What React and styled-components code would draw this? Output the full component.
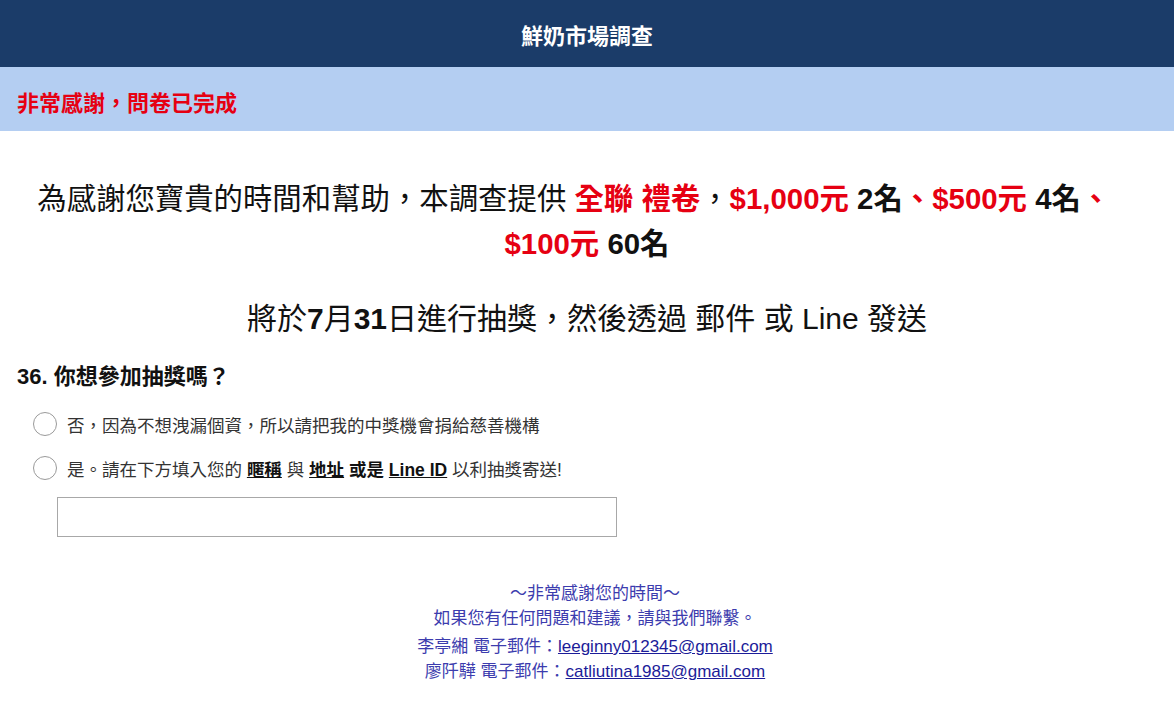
import React from "react";
import styled, { createGlobalStyle } from "styled-components";

const GlobalStyle = createGlobalStyle`
  body {
    margin: 0;
    background: #fff;
    font-family: "Liberation Sans", Arial, "Noto Sans CJK TC", sans-serif;
    color: #111;
  }
`;

const Header = styled.header`
  height: 67px;
  background: #1b3c69;
  display: flex;
  align-items: center;
  justify-content: center;
  color: #fff;
  font-size: 22px;
  font-weight: 700;
`;

const Banner = styled.div`
  height: 64px;
  background: #b4cef2;
  display: flex;
  align-items: center;
  padding-left: 17px;
  padding-top: 3px;
  box-sizing: border-box;
  color: #e60012;
  font-size: 22px;
  font-weight: 700;
`;

const Main = styled.main`
  padding: 0 17px;
`;

const Intro = styled.p`
  margin: 45px 0 0;
  text-align: center;
  font-size: ${(p) => p.size}px;
  line-height: 45px;
  color: #111;
`;

const Draw = styled(Intro)`
  margin-top: 30px;
`;

const Red = styled.span`
  color: #e60012;
  font-weight: 700;
`;

const Strong = styled.span`
  font-weight: 700;
`;

const TrailSpace = styled.span`
  display: inline-block;
  width: 0.9em;
`;

const Question = styled.h2`
  margin: 22px 0 0;
  font-size: 22px;
  line-height: 28px;
  font-weight: 700;
`;

const Options = styled.div`
  display: flex;
  flex-direction: column;
  gap: 18px;
  margin-top: 20px;
  padding-left: 16px;
`;

const Option = styled.label`
  display: flex;
  align-items: center;
  gap: 10px;
  font-size: 17.5px;
  color: #333;
  height: 26px;
`;

const Radio = styled.span`
  width: 22px;
  height: 22px;
  border: 1px solid #9a9a9a;
  border-radius: 50%;
  flex: none;
`;

const Key = styled.span`
  font-weight: 700;
  color: #111;
  text-decoration: underline;
`;

const Bold = styled.span`
  font-weight: 700;
  color: #111;
`;

const TextInput = styled.input`
  display: block;
  margin: 16px 0 0 40px;
  width: 560px;
  height: 40px;
  box-sizing: border-box;
  border: 1px solid #a8a8a8;
  outline: none;
  font-size: 16px;
`;

const Footer = styled.footer`
  margin-top: 44px;
  padding-left: 16px;
  text-align: center;
  color: #3c3cae;
  font-size: 17px;
  line-height: 25px;
`;

const FooterLine = styled.div`
  margin-top: ${(p) => p.gap || 0}px;
`;

const Mail = styled.a`
  color: #1c1c99;
  text-decoration: underline;
`;

export default function App() {
  return (
    <>
      <GlobalStyle />
      <Header>鮮奶市場調查</Header>
      <Banner>非常感謝，問卷已完成</Banner>
      <Main>
        <Intro size={29.4}>
          為感謝您寶貴的時間和幫助，本調查提供 <Red>全聯 禮卷</Red>，
          <Red>$1,000元</Red> <Strong>2名</Strong>
          <Red>、$500元</Red> <Strong>4名</Strong>
          <Red>、</Red>
          <TrailSpace />
          <br />
          <Red>$100元</Red> <Strong>60名</Strong>
        </Intro>
        <Draw size={30}>
          將於<Strong>7</Strong>月<Strong>31</Strong>日進行抽獎，然後透過 郵件 或 Line 發送
        </Draw>
        <Question>36. 你想參加抽獎嗎？</Question>
        <Options>
          <Option>
            <Radio />
            否，因為不想洩漏個資，所以請把我的中獎機會捐給慈善機構
          </Option>
          <Option>
            <Radio />
            <span>
              是。請在下方填入您的 <Key>暱稱</Key> 與 <Key>地址</Key>{" "}
              <Bold>或是</Bold> <Key>Line ID</Key> 以利抽獎寄送!
            </span>
          </Option>
        </Options>
        <TextInput type="text" />
        <Footer>
          <FooterLine>～非常感謝您的時間～</FooterLine>
          <FooterLine>如果您有任何問題和建議，請與我們聯繫。</FooterLine>
          <FooterLine gap={3}>
            李亭緗 電子郵件：<Mail href="#">leeginny012345@gmail.com</Mail>
          </FooterLine>
          <FooterLine>
            廖阡驊 電子郵件：<Mail href="#">catliutina1985@gmail.com</Mail>
          </FooterLine>
        </Footer>
      </Main>
    </>
  );
}
